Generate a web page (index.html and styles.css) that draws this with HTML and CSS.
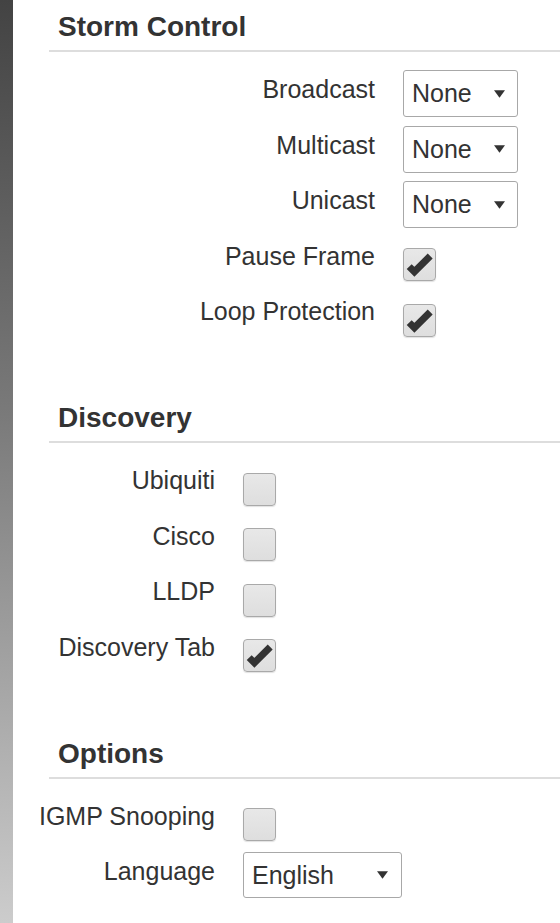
FILE: index.html
```html
<!DOCTYPE html>
<html lang="en">
<head>
<meta charset="utf-8">
<title>Switch Settings</title>
<link rel="stylesheet" href="styles.css">
</head>
<body>
<div class="page">
  <div class="sidebar"></div>
  <main class="main">
    <section class="section">
      <h2 class="section-title">Storm Control</h2>
      <div class="rows rows-wide">
        <div class="row">
          <span class="label">Broadcast</span>
          <div class="select select-sm"><span class="select-value">None</span><svg class="arrow" viewBox="0 0 10 7"><path d="M0 0H10L5 7Z"/></svg></div>
        </div>
        <div class="row">
          <span class="label">Multicast</span>
          <div class="select select-sm"><span class="select-value">None</span><svg class="arrow" viewBox="0 0 10 7"><path d="M0 0H10L5 7Z"/></svg></div>
        </div>
        <div class="row">
          <span class="label">Unicast</span>
          <div class="select select-sm"><span class="select-value">None</span><svg class="arrow" viewBox="0 0 10 7"><path d="M0 0H10L5 7Z"/></svg></div>
        </div>
        <div class="row">
          <span class="label">Pause Frame</span>
          <span class="checkbox checked"><svg viewBox="0 0 31 31"><path d="M5.2 17.6L10.4 22.8L26.2 7"/></svg></span>
        </div>
        <div class="row">
          <span class="label">Loop Protection</span>
          <span class="checkbox checked"><svg viewBox="0 0 31 31"><path d="M5.2 17.6L10.4 22.8L26.2 7"/></svg></span>
        </div>
      </div>
    </section>

    <section class="section">
      <h2 class="section-title">Discovery</h2>
      <div class="rows rows-narrow">
        <div class="row">
          <span class="label">Ubiquiti</span>
          <span class="checkbox"></span>
        </div>
        <div class="row">
          <span class="label">Cisco</span>
          <span class="checkbox"></span>
        </div>
        <div class="row">
          <span class="label">LLDP</span>
          <span class="checkbox"></span>
        </div>
        <div class="row">
          <span class="label">Discovery Tab</span>
          <span class="checkbox checked"><svg viewBox="0 0 31 31"><path d="M5.2 17.6L10.4 22.8L26.2 7"/></svg></span>
        </div>
      </div>
    </section>

    <section class="section">
      <h2 class="section-title">Options</h2>
      <div class="rows rows-narrow">
        <div class="row">
          <span class="label">IGMP Snooping</span>
          <span class="checkbox"></span>
        </div>
        <div class="row">
          <span class="label">Language</span>
          <div class="select select-lg"><span class="select-value">English</span><svg class="arrow" viewBox="0 0 10 7"><path d="M0 0H10L5 7Z"/></svg></div>
        </div>
      </div>
    </section>
  </main>
</div>
</body>
</html>
```

FILE: styles.css
```css
* {
  box-sizing: border-box;
}

html, body {
  margin: 0;
  padding: 0;
  background: #ffffff;
}

body {
  font-family: "Liberation Sans", Arial, sans-serif;
  color: #333333;
}

.page {
  display: flex;
  min-height: 923px;
}

.sidebar {
  flex: 0 0 13px;
  background: linear-gradient(to bottom, #434343 0%, #7a7a7a 45%, #cccccc 100%);
}

.main {
  flex: 1;
  padding-top: 8px;
  overflow: hidden;
}

.section + .section {
  margin-top: 60px;
}

.section-title {
  margin: 0 0 0 36px;
  padding: 2px 0 6px 9px;
  font-size: 28px;
  line-height: 34px;
  font-weight: bold;
  color: #333333;
  border-bottom: 2px solid #dddddd;
}

.rows {
  display: flex;
  flex-direction: column;
  gap: 8.5px;
  padding-top: 18px;
}

.row {
  display: flex;
  align-items: flex-start;
  gap: 28px;
  min-height: 47px;
}

.label {
  display: block;
  margin-top: 4px;
  font-size: 25px;
  line-height: 30px;
  text-align: right;
  white-space: nowrap;
  color: #333333;
}

.rows-wide .label {
  width: 362px;
}

.rows-narrow .label {
  width: 202px;
}

.select {
  display: flex;
  align-items: center;
  justify-content: space-between;
  height: 47px;
  padding: 0 12px 0 8px;
  border: 1px solid #a8a8a8;
  border-radius: 3px;
  background: #ffffff;
  font-size: 25px;
  line-height: 45px;
  color: #333333;
}

.select-sm {
  width: 115px;
}

.select-lg {
  width: 159px;
  height: 46px;
  padding-right: 13px;
}

.arrow {
  width: 11px;
  height: 8px;
  fill: #333333;
}

.checkbox {
  display: block;
  width: 33px;
  height: 33px;
  margin-top: 11.5px;
  border: 1px solid #a9a9a9;
  border-radius: 4px;
  background: linear-gradient(to bottom, #e8e8e8 0%, #dedede 100%);
  box-shadow: 0 1px 1px rgba(0, 0, 0, 0.12);
}

.checkbox svg {
  display: block;
  width: 31px;
  height: 31px;
}

.checkbox svg path {
  fill: none;
  stroke: #333333;
  stroke-width: 7;
  stroke-linejoin: miter;
  stroke-linecap: butt;
}
```
